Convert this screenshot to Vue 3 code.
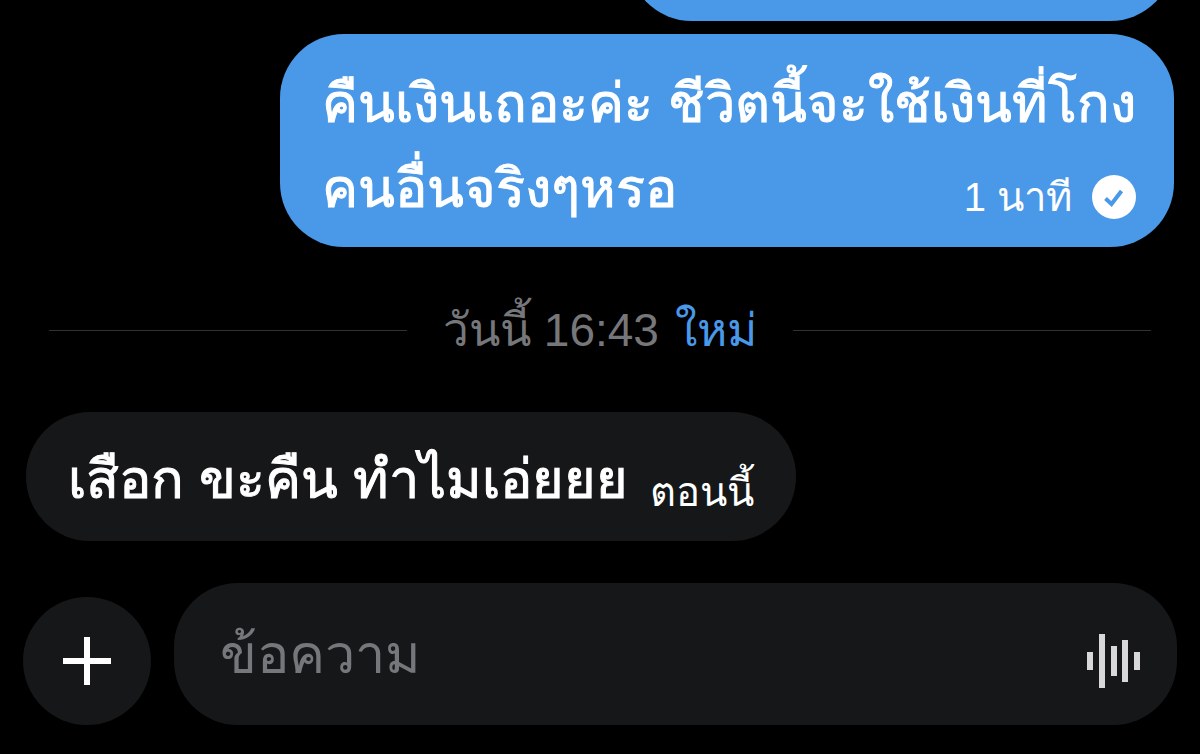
<script setup>
import { ref } from 'vue'

const draft = ref('')
const bars = [
  { x: 1, h: 18 },
  { x: 13, h: 54 },
  { x: 25, h: 30 },
  { x: 36, h: 42 },
  { x: 48, h: 18 },
]
</script>

<template>
  <main class="chat">
    <section class="messages">
      <div class="bubble sent earlier"></div>

      <article class="bubble sent">
        <p class="text">คืนเงินเถอะค่ะ ชีวิตนี้จะใช้เงินที่โกง</p>
        <div class="last-row">
          <p class="text">คนอื่นจริงๆหรอ</p>
          <div class="status">
            <span class="time">1 นาที</span>
            <svg class="check" viewBox="0 0 44 44" aria-hidden="true">
              <circle cx="22" cy="22" r="22" fill="#fff" />
              <path d="M13.5 23.5 L19.5 29 L29.5 16" fill="none" stroke="#4a98e8" stroke-width="4" />
            </svg>
          </div>
        </div>
      </article>

      <div class="divider">
        <span class="day">วันนี้ 16:43</span>
        <span class="new">ใหม่</span>
      </div>

      <article class="bubble received">
        <p class="text">เสือก ขะคืน ทำไมเอ่ยยย</p>
        <span class="time">ตอนนี้</span>
      </article>
    </section>

    <form class="composer" @submit.prevent>
      <button class="add" type="button" aria-label="เพิ่ม">
        <svg viewBox="0 0 48 48" width="48" height="48" aria-hidden="true">
          <path d="M24 0V48M0 24H48" stroke="#fff" stroke-width="6" />
        </svg>
      </button>
      <div class="field">
        <input v-model="draft" type="text" placeholder="ข้อความ" aria-label="ข้อความ" />
        <button class="voice" type="button" aria-label="เสียง">
          <svg viewBox="0 0 55 54" width="55" height="54" aria-hidden="true">
            <rect v-for="bar in bars" :key="bar.x" :x="bar.x" :y="27 - bar.h / 2" width="6" :height="bar.h" fill="#d8d8db" />
          </svg>
        </button>
      </div>
    </form>
  </main>
</template>

<style>
body {
  margin: 0;
  background: #000;
}
</style>

<style scoped>
.chat {
  box-sizing: border-box;
  height: 100vh;
  display: flex;
  flex-direction: column;
  justify-content: flex-end;
  padding-bottom: 29px;
  overflow: hidden;
  background: #000;
  color: #fff;
  font-family: "Liberation Sans", sans-serif;
}

.messages {
  display: flex;
  flex-direction: column;
  padding: 0 26px;
}

.bubble {
  box-sizing: border-box;
  border-radius: 64px;
}

.sent {
  align-self: flex-end;
  padding: 27px 38px 16px 42px;
  background: #4a98e8;
}

.earlier {
  width: 546px;
  height: 128px;
  margin-bottom: 13px;
}

.text {
  margin: 0;
  font-size: 54px;
  line-height: 85px;
  white-space: nowrap;
  -webkit-text-stroke: 1px currentColor;
}

.last-row {
  display: flex;
  justify-content: space-between;
}

.status {
  display: flex;
  align-items: center;
  gap: 20px;
  padding-top: 16px;
}

.time {
  font-size: 40px;
  line-height: 60px;
  white-space: nowrap;
}

.check {
  width: 44px;
  height: 44px;
}

.divider {
  display: flex;
  align-items: center;
  margin: 42px 23px 41px;
  font-size: 46px;
  line-height: 82px;
  white-space: nowrap;
}

.divider::before,
.divider::after {
  content: "";
  flex: 1;
  height: 1px;
  background: #2f3336;
}

.day {
  margin-left: 36px;
  color: #76777b;
}

.new {
  margin: 0 36px 0 16px;
  color: #4a98e8;
}

.received {
  align-self: flex-start;
  display: flex;
  align-items: flex-end;
  gap: 22px;
  padding: 25px 42px 19px;
  background: #161719;
}

.composer {
  display: flex;
  align-items: flex-end;
  gap: 23px;
  margin: 42px 23px 0;
}

.composer button {
  display: flex;
  align-items: center;
  justify-content: center;
  padding: 0;
  border: 0;
  background: none;
}

.composer .add {
  flex: none;
  width: 128px;
  height: 128px;
  border-radius: 50%;
  background: #161719;
}

.field {
  flex: 1;
  display: flex;
  align-items: center;
  height: 142px;
  box-sizing: border-box;
  padding: 0 36px 0 46px;
  border-radius: 64px;
  background: #161719;
}

.field input {
  flex: 1;
  min-width: 0;
  height: 100px;
  padding: 0;
  border: 0;
  outline: 0;
  background: none;
  color: #fff;
  font: inherit;
  font-size: 54px;
}

.field input::placeholder {
  color: #76777b;
  opacity: 1;
}

.composer .voice {
  padding-top: 14px;
}
</style>
